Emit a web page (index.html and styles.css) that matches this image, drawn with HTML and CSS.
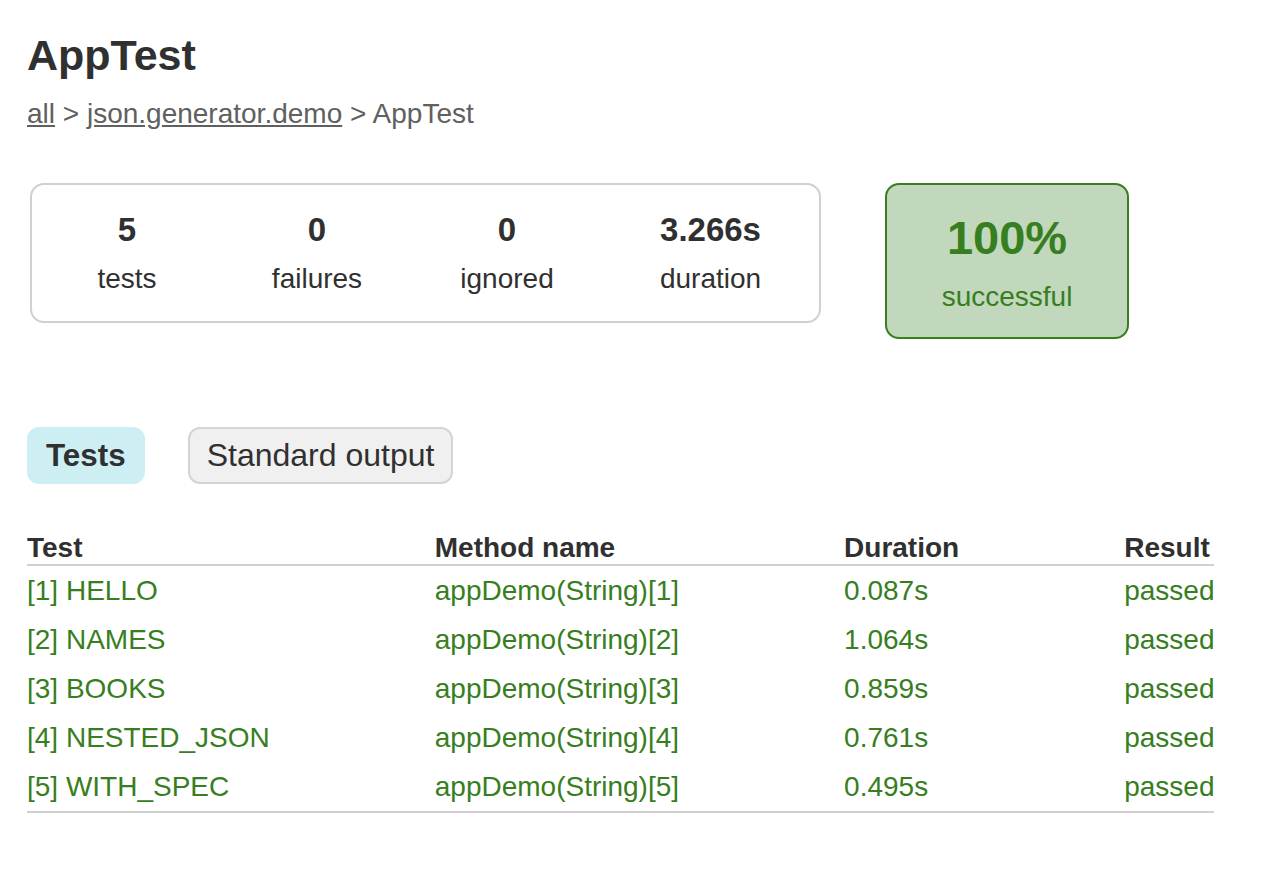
FILE: index.html
```html
<!DOCTYPE html>
<html lang="en">
<head>
<meta charset="utf-8">
<title>Test results - AppTest</title>
<link rel="stylesheet" href="styles.css">
</head>
<body>
<div class="content">
  <h1 class="title">AppTest</h1>
  <div class="breadcrumbs">
    <a href="#">all</a> &gt; <a href="#">json.generator.demo</a> &gt; AppTest
  </div>

  <div class="summary">
    <div class="summary-group">
      <div class="info">
        <div class="counter">5</div>
        <p class="label">tests</p>
      </div>
      <div class="info">
        <div class="counter">0</div>
        <p class="label">failures</p>
      </div>
      <div class="info">
        <div class="counter">0</div>
        <p class="label">ignored</p>
      </div>
      <div class="info info-duration">
        <div class="counter">3.266s</div>
        <p class="label">duration</p>
      </div>
    </div>
    <div class="success-rate">
      <div class="percent">100%</div>
      <p class="label">successful</p>
    </div>
  </div>

  <ul class="tab-links">
    <li class="tab selected"><a href="#">Tests</a></li>
    <li class="tab"><a href="#">Standard output</a></li>
  </ul>

  <table class="tests">
    <thead>
      <tr>
        <th>Test</th>
        <th>Method name</th>
        <th>Duration</th>
        <th>Result</th>
      </tr>
    </thead>
    <tbody>
      <tr>
        <td>[1] HELLO</td>
        <td>appDemo(String)[1]</td>
        <td>0.087s</td>
        <td>passed</td>
      </tr>
      <tr>
        <td>[2] NAMES</td>
        <td>appDemo(String)[2]</td>
        <td>1.064s</td>
        <td>passed</td>
      </tr>
      <tr>
        <td>[3] BOOKS</td>
        <td>appDemo(String)[3]</td>
        <td>0.859s</td>
        <td>passed</td>
      </tr>
      <tr>
        <td>[4] NESTED_JSON</td>
        <td>appDemo(String)[4]</td>
        <td>0.761s</td>
        <td>passed</td>
      </tr>
      <tr>
        <td>[5] WITH_SPEC</td>
        <td>appDemo(String)[5]</td>
        <td>0.495s</td>
        <td>passed</td>
      </tr>
    </tbody>
  </table>
</div>
</body>
</html>
```

FILE: styles.css
```css
html, body {
  background: #ffffff;
}

body {
  margin: 0;
  font-family: "Liberation Sans", Arial, Helvetica, sans-serif;
  font-size: 28px;
  color: #303030;
}

.content {
  padding: 30px 27px 40px 27px;
}

.title {
  margin: 0;
  font-size: 43px;
  line-height: 50px;
  font-weight: bold;
  color: #303030;
}

.breadcrumbs {
  margin-top: 18px;
  line-height: 32px;
  color: #606060;
}

.breadcrumbs a {
  color: #606060;
  text-decoration: underline;
}

/* summary */
.summary {
  display: flex;
  align-items: flex-start;
  margin-top: 53px;
  margin-left: 3px;
}

.summary-group {
  display: flex;
  border: 2px solid #d0d0d0;
  border-radius: 14px;
}

.info {
  width: 190px;
  padding: 26px 0;
  text-align: center;
}

.info-duration {
  width: 217px;
}

.counter {
  font-size: 33px;
  line-height: 38px;
  font-weight: bold;
  margin-bottom: 14px;
}

.label {
  margin: 0;
  line-height: 32px;
}

.success-rate {
  width: 240px;
  margin-left: 64px;
  padding: 26px 0 24px 0;
  text-align: center;
  border: 2px solid #377e21;
  border-radius: 14px;
  background: #c1d8bd;
  color: #377e21;
}

.percent {
  font-size: 47px;
  line-height: 54px;
  font-weight: bold;
  margin-bottom: 16px;
}

/* tabs */
.tab-links {
  list-style: none;
  display: flex;
  gap: 43px;
  margin: 88px 0 0 0;
  padding: 0;
}

.tab {
  border: 2px solid #d4d4d4;
  background: #f0f0f0;
  border-radius: 12px;
  padding: 8px 17px;
  font-size: 32px;
  line-height: 37px;
}

.tab a {
  color: #303030;
  text-decoration: none;
}

.tab.selected {
  background: #cdeff4;
  border-color: #cdeff4;
  font-weight: bold;
  font-size: 31.4px;
}

/* table */
.tests {
  margin-top: 47px;
  border-collapse: collapse;
  border-bottom: 2px solid #d0d0d0;
}

.tests th {
  text-align: left;
  white-space: nowrap;
  font-weight: bold;
  color: #303030;
  padding: 0 0 0 165px;
  line-height: 33px;
  border-bottom: 2px solid #d0d0d0;
}

.tests td {
  white-space: nowrap;
  color: #377e21;
  padding: 8.5px 0 8.5px 165px;
  line-height: 32px;
}

.tests th:first-child,
.tests td:first-child {
  padding-left: 0;
}
```
